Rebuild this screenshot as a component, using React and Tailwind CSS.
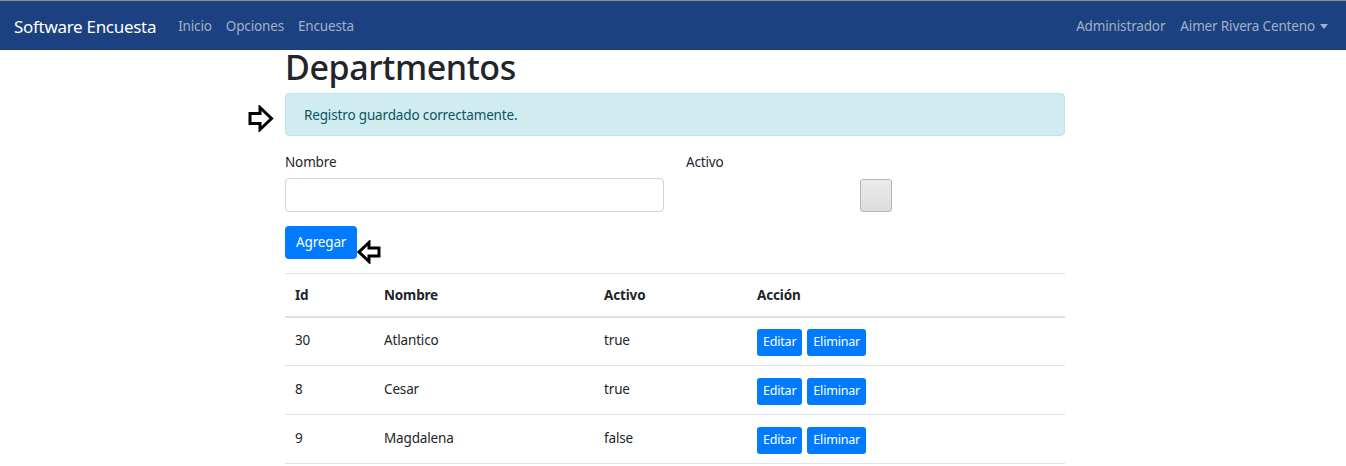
import { useState } from 'react'

const departamentos = [
  { id: 30, nombre: 'Atlantico', activo: true },
  { id: 8, nombre: 'Cesar', activo: true },
  { id: 9, nombre: 'Magdalena', activo: false },
]

const font = { fontFamily: '"Noto Sans", "Open Sans", Arial, sans-serif' }

function ArrowRight() {
  return (
    <svg width="26" height="27" viewBox="0 0 26 27" className="block">
      <path d="M2 8.5 H12 V2.5 L23.5 13.5 L12 24.5 V18.5 H2 Z" fill="white" stroke="black" strokeWidth="3" strokeLinejoin="miter" />
    </svg>
  )
}

function ArrowLeft() {
  return (
    <svg width="24" height="24" viewBox="0 0 24 24" className="block">
      <path d="M22 8 H12 V2.5 L2 12 L12 21.5 V16 H22 Z" fill="white" stroke="black" strokeWidth="3" strokeLinejoin="miter" />
    </svg>
  )
}

function App() {
  const [nombre, setNombre] = useState('')

  return (
    <div className="min-h-[466px] bg-white text-[#212529]" style={font}>
      <nav className="flex h-[50px] items-center justify-between border-t border-[#8c8f94] bg-[#1b4180] pl-[14px] pr-[18px] pt-[2px]">
        <div className="flex items-center">
          <span className="mr-[22px] text-[17px] tracking-[-0.3px] text-white">Software Encuesta</span>
          {['Inicio', 'Opciones', 'Encuesta'].map((link) => (
            <a className="mr-[14px] text-[13.5px] tracking-[-0.15px] text-[#a2b1c8]" href="#" key={link}>{link}</a>
          ))}
        </div>
        <div className="flex items-center gap-[15px] text-[13.5px] tracking-[-0.15px] text-[#a2b1c8]">
          <span>Administrador</span>
          <span className="flex items-center">
            Aimer Rivera Centeno
            <span className="ml-[5px] inline-block border-x-[4px] border-t-[5px] border-x-transparent border-t-[#a2b1c8]"></span>
          </span>
        </div>
      </nav>

      <div className="mx-auto w-[784px] pl-[4px]">
        <h1 className="text-[34px] font-medium leading-[34px] tracking-[-0.4px] text-[#212529]">Departmentos</h1>

        <div className="relative mt-[9px]">
          <div className="absolute left-[-37px] top-[12px]"><ArrowRight /></div>
          <div className="rounded-[4px] border border-[#bee5eb] bg-[#d1ecf1] px-[18px] py-[10.5px] text-[13.5px] leading-[20px] tracking-[-0.15px] text-[#0c5460]">
            Registro guardado correctamente.
          </div>
        </div>

        <div className="mt-[16px] grid grid-cols-2 gap-[22px] text-[13.5px] tracking-[-0.15px]">
          <div>
            <label className="block leading-[20px]">Nombre</label>
            <input className="mt-[6px] h-[34px] w-full rounded-[4px] border border-[#ced4da] px-3 outline-none" value={nombre} onChange={(event) => setNombre(event.target.value)} />
          </div>
          <div>
            <label className="block leading-[20px]">Activo</label>
            <div className="mt-[7px] flex justify-center">
              <div className="h-[33px] w-[32px] rounded-[3px] border border-[#b5b5b5] bg-gradient-to-b from-[#ececec] to-[#dcdcdc]"></div>
            </div>
          </div>
        </div>

        <div className="mt-[14px] flex items-end">
          <button className="h-[33px] rounded-[4px] bg-[#007bff] px-[11px] text-[13.5px] tracking-[-0.15px] text-white">Agregar</button>
          <div className="mb-[-5px]"><ArrowLeft /></div>
        </div>

        <table className="mt-[14px] w-full border-t border-[#dee2e6] text-left text-[13.5px] tracking-[-0.15px]">
          <thead>
            <tr className="border-b-2 border-[#dee2e6]">
              <th className="h-[43px] w-[89px] px-[10px] font-bold">Id</th>
              <th className="w-[220px] px-[10px] font-bold">Nombre</th>
              <th className="w-[153px] px-[10px] font-bold">Activo</th>
              <th className="px-[10px] font-bold">Acción</th>
            </tr>
          </thead>
          <tbody>
            {departamentos.map((dep) => (
              <tr className="border-b border-[#dee2e6]" key={dep.id}>
                <td className="h-[49px] px-[10px] pb-[2px]">{dep.id}</td>
                <td className="px-[10px] pb-[2px]">{dep.nombre}</td>
                <td className="px-[10px] pb-[2px]">{String(dep.activo)}</td>
                <td className="px-[10px]">
                  <div className="flex gap-[5px] pt-[2px]">
                    <button className="h-[27px] rounded-[3px] bg-[#007bff] px-[6px] text-[12.5px] tracking-[-0.2px] text-white">Editar</button>
                    <button className="h-[27px] rounded-[3px] bg-[#007bff] px-[6px] text-[12.5px] tracking-[-0.2px] text-white">Eliminar</button>
                  </div>
                </td>
              </tr>
            ))}
          </tbody>
        </table>
      </div>
    </div>
  )
}

export default App
